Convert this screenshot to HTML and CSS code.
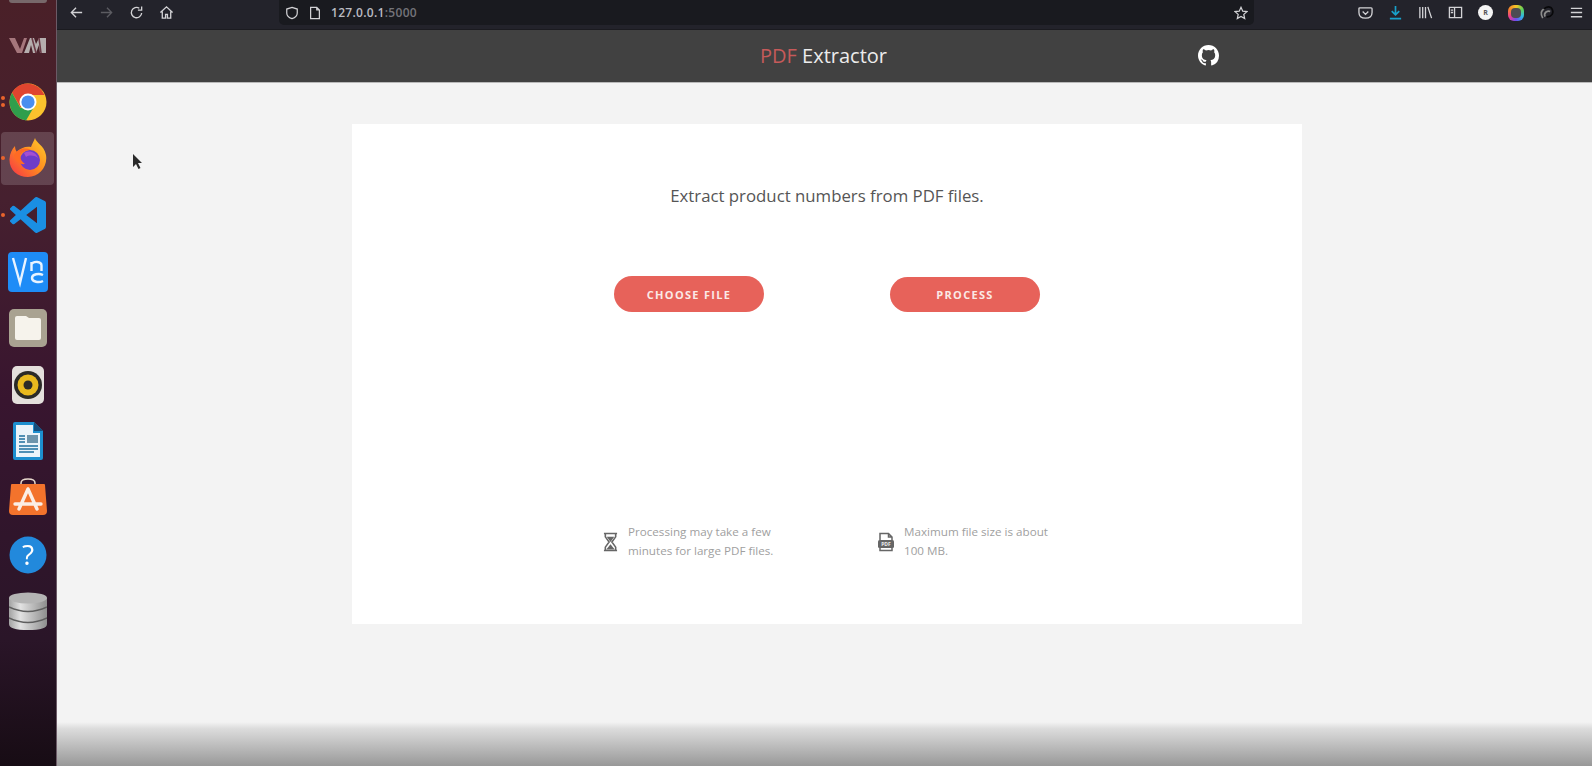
FILE: index.html
```html
<!DOCTYPE html>
<html lang="en">
<head>
<meta charset="utf-8">
<title>PDF Extractor</title>
<link rel="stylesheet" href="styles.css">
</head>
<body>
<div class="screen">
  <aside class="dock">
    <div class="dock-top"></div>
    <div class="dock-item">
      <svg width="40" height="18" viewBox="0 0 40 18"><path d="M1 2h6l5 11 4-11h3l-5 15h-5z" fill="#a5767c"/><path d="M16 17l6-15h4l2 6 3-6h7v15h-6l-1-8-3 8h-3l-2-8-2 8z" fill="#b5aeae"/><path d="M24 2l4 15M31 2l2 15" stroke="#6a3a46" stroke-width="1.6"/></svg>
    </div>
    <div class="dock-item">
      <span class="run-dots"><i></i><i></i></span>
      <svg width="38" height="38" viewBox="0 0 38 38"><circle cx="19" cy="19" r="18.5" fill="#fbc22d"/><path d="M19 .5A18.5 18.5 0 0 0 3 9.800l8.800 15 7.200-12.800h16.500A18.500 18.500 0 0 0 19 .5z" fill="#e0452f"/><path d="M3 9.800A18.500 18.500 0 0 0 17 37.400l8.500-14.400-14 2z" fill="#2f9e4c"/><circle cx="19" cy="19" r="8.500" fill="#fff"/><circle cx="19" cy="19" r="6.600" fill="#4a8ef0"/></svg>
    </div>
    <div class="dock-item dock-active">
      <span class="run-dots"><i></i></span>
      <svg width="38" height="40" viewBox="0 0 38 40"><defs><linearGradient id="fox" x1="1" y1="0" x2="0" y2="1"><stop offset="0" stop-color="#ffd02c"/><stop offset=".5" stop-color="#ff8a1f"/><stop offset="1" stop-color="#f5304a"/></linearGradient></defs><path d="M26 0c1 5 9 7 11 17 2 12-7 22-18 22S0 31 .5 21C1 15 3 11 6 8c0 3 1 5 2 6 3-4 9-6 14-5 1-3 3-6 4-9z" fill="url(#fox)"/><circle cx="21" cy="22" r="10" fill="#6d3cc9"/><path d="M15 15c5-3 12-1 14 5-4-3-9-3-12-1z" fill="#a54fd0"/><path d="M5 17c3-6 11-8 17-5-5 0-9 2-11 5 0 4 2 7 5 9-5 1-10-3-11-9z" fill="#ff6a24"/></svg>
    </div>
    <div class="dock-item">
      <span class="run-dots"><i></i></span>
      <svg width="36" height="36" viewBox="0 0 24 24"><path d="M23.150 2.587L18.210.210a1.494 1.494 0 0 0-1.705.290l-9.460 8.630-4.120-3.128a.999.999 0 0 0-1.276.057L.327 7.261A1 1 0 0 0 .326 8.740L3.899 12 .326 15.260a1 1 0 0 0 .001 1.479L1.650 17.940a.999.999 0 0 0 1.276.057l4.120-3.128 9.460 8.630a1.492 1.492 0 0 0 1.704.290l4.942-2.377A1.500 1.500 0 0 0 24 20.060V3.939a1.500 1.500 0 0 0-.850-1.352zm-5.146 14.861L10.826 12l7.178-5.448v10.896z" fill="#1a8fe3"/></svg>
    </div>
    <div class="dock-item">
      <svg width="40" height="40" viewBox="0 0 40 40"><rect width="40" height="40" rx="4" fill="#1e8cf7"/><path d="M5 6l7 25 6-25M23.500 19v-9M23.500 12c2-3 10-3 10 1.500V19M35 23c-4-2-11-1-11 3s7 5 11 3" fill="none" stroke="#e8f3ff" stroke-width="2.400"/></svg>
    </div>
    <div class="dock-item">
      <svg width="38" height="38" viewBox="0 0 38 38"><rect width="38" height="38" rx="5" fill="#a9a291"/><path d="M6 9q0-2 2-2h9l3 2h10q2 0 2 2v18q0 2-2 2H8q-2 0-2-2z" fill="#f6f3ec"/></svg>
    </div>
    <div class="dock-item">
      <svg width="32" height="38" viewBox="0 0 32 38"><rect width="32" height="38" rx="5" fill="#e4dfdc"/><circle cx="16" cy="19" r="14" fill="#2b2a27"/><circle cx="16" cy="19" r="10.500" fill="#e9b91e"/><circle cx="16" cy="19" r="4.500" fill="#2b2a27"/></svg>
    </div>
    <div class="dock-item">
      <svg width="30" height="38" viewBox="0 0 30 38"><path d="M2 0h19l9 9v27q0 2-2 2H2q-2 0-2-2V2q0-2 2-2z" fill="#1d8fcf"/><path d="M3 3h17v8h7v24H3z" fill="#eaf4fa"/><path d="M21 0l9 9h-9z" fill="#164e7c"/><path d="M6 14h6M6 17h6M6 20h6M6 24h19M6 27h19M6 30h15" stroke="#1d6f9f" stroke-width="1.600"/><rect x="14" y="13" width="11" height="8" fill="#6d95ac"/></svg>
    </div>
    <div class="dock-item dock-store">
      <svg width="38" height="37" viewBox="0 0 38 37"><path d="M12 7V5q0-4 7-4t7 4v2" fill="none" stroke="#e7d9cd" stroke-width="1.500"/><path d="M3 6h32q1 0 1 1l2 26q0 4-4 4H4q-4 0-4-4L2 7q0-1 1-1z" fill="#f3732c"/><path d="M19 11L10 31M19 11l9 20M6 26h26" fill="none" stroke="#fbeee5" stroke-width="3.400" stroke-linecap="round"/></svg>
    </div>
    <div class="dock-item">
      <svg width="38" height="38" viewBox="0 0 38 38"><circle cx="19" cy="19" r="18.500" fill="#2289dc"/><text x="19" y="29" class="help-mark">?</text></svg>
    </div>
    <div class="dock-item">
      <svg width="38" height="38" viewBox="0 0 38 38"><defs><linearGradient id="disk" x1="0" x2="1" y1="0" y2="0"><stop offset="0" stop-color="#a2a2a2"/><stop offset=".3" stop-color="#e2e2e2"/><stop offset="1" stop-color="#8e8e8e"/></linearGradient></defs><path d="M0 27h38v5q0 6-19 6T0 32z" fill="url(#disk)"/><path d="M0 15h38v10q0 5-19 5T0 25z" fill="url(#disk)"/><path d="M0 6h38v9q0 5-19 5T0 15z" fill="url(#disk)"/><ellipse cx="19" cy="6" rx="19" ry="5.500" fill="#b4b4b4"/><path d="M0 15q19 9 38 0M0 26q19 9 38 0" fill="none" stroke="#5e5e5e" stroke-width="1.400"/></svg>
    </div>
  </aside>

  <div class="browser">
    <nav class="toolbar">
      <div class="nav-buttons">
        <svg class="tb-icon" viewBox="0 0 16 16"><path d="M14 8H3M7.500 3L2.500 8l5 5"/></svg>
        <svg class="tb-icon tb-dim" viewBox="0 0 16 16"><path d="M2 8h11M8.500 3l5 5-5 5"/></svg>
        <svg class="tb-icon" viewBox="0 0 16 16"><path d="M13.500 8.500A5.500 5.500 0 1 1 11 3.500M13.500 1.500v4h-4"/></svg>
        <svg class="tb-icon" viewBox="0 0 16 16"><path d="M1.500 8L8 2l6.500 6M3.500 7v7h3.500v-4h2v4h3.500V7"/></svg>
      </div>
      <div class="urlbar">
        <svg class="tb-icon tb-small" viewBox="0 0 16 16"><path d="M8 1.500l6 2v4.500q0 4.500-6 6.500-6-2-6-6.500V3.500z"/></svg>
        <svg class="tb-icon tb-small" viewBox="0 0 16 16"><path d="M3 1.500h7l3 3v10H3zM10 1.500v3h3"/></svg>
        <span class="url"><b>127.0.0.1</b>:5000</span>
        <svg class="tb-icon tb-small url-star" viewBox="0 0 16 16"><path d="M8 1.500l2 4.400 4.800.5-3.600 3.200 1 4.700L8 12l-4.200 2.300 1-4.700L1.200 6.400 6 5.900z"/></svg>
      </div>
      <div class="tools">
        <svg class="tb-icon" viewBox="0 0 16 16"><path d="M2 3h12q1 0 1 1v4q0 6-7 6T1 8V4q0-1 1-1zM5 7l3 3 3-3"/></svg>
        <svg class="tb-icon tb-blue" viewBox="0 0 16 16"><path d="M8 1v9M4 6.500L8 10.500l4-4M2 14.500h12"/></svg>
        <svg class="tb-icon" viewBox="0 0 16 16"><path d="M2 2v12M5 2v12M8 2v12M10.500 2l4 12"/></svg>
        <svg class="tb-icon" viewBox="0 0 16 16"><path d="M1.500 2.500h13v11h-13zM7 2.500v11M3 5.500h2.500M3 8h2.500"/></svg>
        <span class="ext-round"><span>R</span></span>
        <span class="ext-color"></span>
        <svg class="tb-icon tb-ext" viewBox="0 0 16 16"><path d="M4 14Q2 11 2.500 8 3 5 6 4M6.500 12.500Q5 9.500 7.500 7.500 10 6 12 7"/><path class="tb-ext-dark" d="M5 4.500Q9 .5 13 3q3 3 1 7-2 3-6 2.500"/></svg>
        <svg class="tb-icon" viewBox="0 0 16 16"><path d="M2 3.500h12M2 8h12M2 12.500h12"/></svg>
      </div>
    </nav>

    <header class="app-header">
      <h1 class="brand"><span class="brand-pdf">PDF</span> Extractor</h1>
      <svg class="gh" viewBox="0 0 16 16"><path d="M8 0C3.580 0 0 3.580 0 8c0 3.540 2.290 6.530 5.470 7.590.4.070.55-.17.550-.38v-1.340c-2.230.48-2.700-1.070-2.700-1.070-.36-.92-.89-1.170-.89-1.170-.73-.5.050-.49.050-.49.800.06 1.230.83 1.230.83.710 1.220 1.870.87 2.330.66.070-.52.280-.87.510-1.070-1.780-.2-3.640-.89-3.640-3.950 0-.87.310-1.590.82-2.150-.08-.2-.36-1.020.08-2.120 0 0 .67-.21 2.200.82a7.600 7.600 0 0 1 4 0c1.530-1.040 2.200-.82 2.200-.82.440 1.100.16 1.920.08 2.120.51.560.82 1.270.82 2.150 0 3.070-1.870 3.750-3.650 3.950.29.250.54.730.54 1.480v2.200c0 .21.150.46.550.38A8 8 0 0 0 16 8c0-4.420-3.580-8-8-8z"/></svg>
    </header>

    <main class="page">
      <section class="card">
        <p class="lead">Extract product numbers from PDF files.</p>
        <div class="actions">
          <button class="btn" type="button">CHOOSE FILE</button>
          <button class="btn btn-low" type="button">PROCESS</button>
        </div>
        <div class="notes">
          <div class="note">
            <svg class="note-icon" viewBox="0 0 16 20"><path d="M1 1h14M1 19h14M2.500 1v3.500L6.500 10l-4 5.500V19M13.500 1v3.500L9.500 10l4 5.500V19" fill="none" stroke="#666" stroke-width="1.700"/><path d="M4 4.500h8L8 10zM3.500 18L8 12.500l4.500 5.500z" fill="#666"/></svg>
            <p>Processing may take a few minutes for large PDF files.</p>
          </div>
          <div class="note note-wide">
            <svg class="note-icon note-pdf" viewBox="0 0 18 20"><path d="M3 8V1.500h8.500L15 5v3M3 16v2.500h12V16M11.500 1.500V5H15" fill="none" stroke="#666" stroke-width="1.500"/><rect x="1" y="8" width="16" height="8" rx="1.500" fill="#666"/><text x="9" y="14" class="pdf-mark">PDF</text></svg>
            <p>Maximum file size is about 100 MB.</p>
          </div>
        </div>
      </section>
      <svg class="cursor" width="11" height="17" viewBox="0 0 11 17"><path d="M1 1v13l3-3 2.500 5 2-1-2.500-5h4z" fill="#2a2a2a"/></svg>
      <div class="bottom-shade"></div>
    </main>
  </div>
</div>
</body>
</html>
```
FILE: styles.css
```css
* { box-sizing: border-box; }
html, body { margin: 0; height: 100%; overflow: hidden; }
body { font-family: "Open Sans", "Noto Sans", sans-serif; background: #f3f3f3; }

.screen { display: flex; width: 1592px; height: 766px; filter: blur(.4px); }

.dock {
  width: 57px;
  flex: none;
  display: flex;
  flex-direction: column;
  background: linear-gradient(180deg, #4a2028 0, #46202f 200px, #38152f 400px, #2a1528 640px, #170c14 766px);
  border-right: 1px solid #6b5a66;
}
.dock-top {
  width: 38px;
  height: 3px;
  margin: 0 auto 14px;
  background: #77686a;
  border-radius: 0 0 6px 6px;
}
.dock-item {
  position: relative;
  height: 56.600px;
  flex: none;
  display: flex;
  align-items: center;
  justify-content: center;
  padding-right: 1px;
}
.dock-active::before {
  content: "";
  position: absolute;
  inset: 2px 2px 2px 1px;
  background: rgba(255, 255, 255, .16);
  border-radius: 4px;
}
.dock-item svg { position: relative; }
.dock-store svg { top: -2px; }
.run-dots {
  position: absolute;
  left: 1px;
  top: 0;
  bottom: 0;
  display: flex;
  flex-direction: column;
  justify-content: center;
  gap: 3px;
}
.run-dots i { width: 4px; height: 4px; border-radius: 50%; background: #e9642c; }
.help-mark { font: 28px "Open Sans", sans-serif; fill: #fff; text-anchor: middle; }

.browser { flex: 1; min-width: 0; display: flex; flex-direction: column; }

.toolbar {
  height: 30px;
  flex: none;
  display: flex;
  align-items: center;
  background: #23232b;
  border-bottom: 1px solid #1b1b20;
  padding-bottom: 4px;
}
.tb-icon {
  width: 15px;
  height: 15px;
  flex: none;
  fill: none;
  stroke: #d3d3d6;
  stroke-width: 1.400;
}
.tb-small { width: 14px; height: 14px; }
.tb-dim { stroke: #5c5c62; }
.tb-blue { stroke: #19a0c9; stroke-width: 1.800; }
.tb-ext { stroke: #8c8c8c; stroke-width: 1.800; }
.tb-ext-dark { stroke: #08080a; }
.nav-buttons {
  display: flex;
  align-items: center;
  gap: 15px;
  margin-left: 12px;
  width: 210px;
}
.urlbar {
  width: 975px;
  height: 25px;
  align-self: flex-start;
  display: flex;
  align-items: center;
  gap: 9px;
  padding: 0 6px;
  background: #191a1f;
  border-radius: 0 0 5px 5px;
}
.url { font-size: 12px; font-weight: 600; color: #74747a; letter-spacing: .3px; margin-left: 0; }
.url b { font-weight: 600; color: #b9bbc2; }
.url-star { margin-left: auto; }
.tools {
  flex: 1;
  display: flex;
  align-items: center;
  justify-content: flex-end;
  gap: 15px;
  padding-right: 8px;
}
.ext-round {
  width: 15px;
  height: 15px;
  border-radius: 50%;
  background: #f4f4f4;
  display: flex;
  align-items: center;
  justify-content: center;
}
.ext-round span { font-size: 7px; font-weight: 700; color: #555; }
.ext-color {
  width: 16px;
  height: 16px;
  border-radius: 6px;
  background: conic-gradient(#f5c525, #5fd35a, #2fb7e8, #6d4df0, #ee3d8e, #f5842a, #f5c525);
  position: relative;
}
.ext-color::after {
  content: "";
  position: absolute;
  inset: 3px;
  border-radius: 40%;
  background: #4c4c52;
}

.app-header {
  position: relative;
  height: 53px;
  flex: none;
  display: flex;
  align-items: center;
  justify-content: center;
  background: #414141;
  border-bottom: 1px solid #b9b9b9;
  padding: 0 0 1px 0;
}
.brand {
  margin: 0 2px 0 0;
  font-size: 20px;
  font-weight: 400;
  color: #ececec;
}
.brand-pdf { color: #c65a5a; }
.gh {
  position: absolute;
  left: 1141px;
  top: 15px;
  width: 21px;
  height: 21px;
  fill: #fff;
}

.page {
  position: relative;
  flex: 1;
  background: #f3f3f3;
  padding-top: 41px;
}
.card {
  width: 950px;
  height: 500px;
  margin-left: 295px;
  background: #fff;
  display: flex;
  flex-direction: column;
  align-items: center;
  padding-top: 60px;
}
.lead {
  margin: 0;
  font-size: 16.800px;
  line-height: 24px;
  color: #555;
}
.actions {
  display: flex;
  align-items: flex-end;
  gap: 126px;
  margin-top: 68px;
}
.btn {
  width: 150px;
  height: 36px;
  border: 0;
  border-radius: 18px;
  background: #e7625a;
  color: #fbe9e6;
  font: 700 11px "Open Sans", sans-serif;
  letter-spacing: 1.300px;
}
.btn-low { height: 35px; }
.notes {
  align-self: flex-start;
  display: flex;
  gap: 79px;
  margin: 211px 0 0 251px;
}
.note {
  width: 195px;
  display: flex;
  align-items: center;
  gap: 10px;
}
.note-wide { width: 180px; gap: 9px; }
.note p {
  margin: 0;
  font-size: 11.650px;
  line-height: 18.500px;
  color: #a0a0a0;
}
.note-icon { width: 15px; height: 20px; flex: none; }
.note-pdf { width: 18px; }
.pdf-mark { font: 700 5px "Open Sans", sans-serif; fill: #eee; text-anchor: middle; }
.cursor { position: absolute; left: 75px; top: 70px; }
.bottom-shade {
  position: absolute;
  left: 0;
  right: 0;
  bottom: 0;
  height: 44px;
  background: linear-gradient(180deg, #f3f3f3 0, #dcdcdc 15%, #b8b8b8 60%, #989898 100%);
}
```
